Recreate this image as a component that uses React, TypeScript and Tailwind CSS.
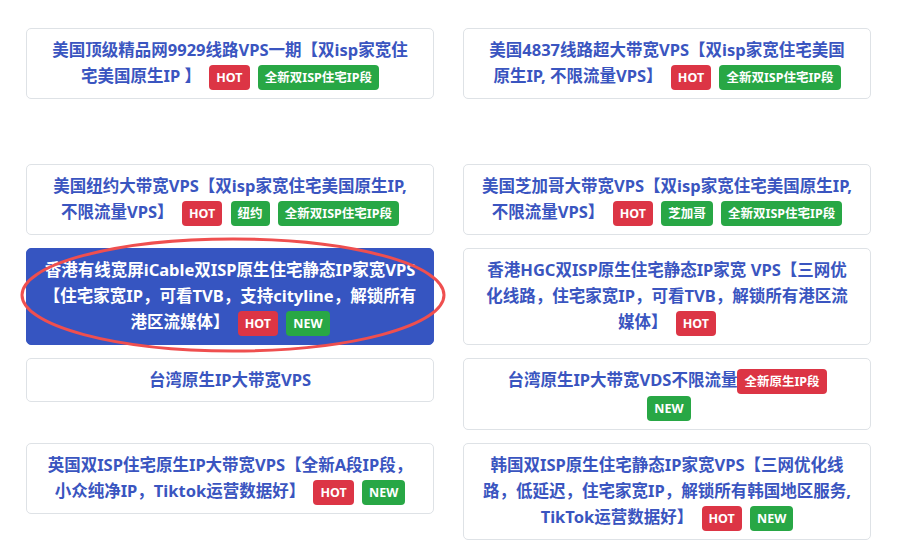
import React from 'react'

type Color = 'red' | 'green'

function Badge({ color, children, tight }: { color: Color; children: React.ReactNode; tight?: boolean }) {
  return (
    <span
      className={`inline-block rounded-[4px] px-[7px] py-[4px] align-middle text-[12.5px] leading-[17px] font-bold text-white ${
        tight ? '' : 'ml-[4px]'
      } ${color === 'red' ? 'bg-[#dc3545]' : 'bg-[#28a745]'}`}
    >
      {children}
    </span>
  )
}

const Hot = () => <Badge color="red">HOT</Badge>
const New = () => <Badge color="green">NEW</Badge>
const IspBlock = () => <Badge color="green">全新双ISP住宅IP段</Badge>

function Card({ active, children }: { active?: boolean; children: React.ReactNode }) {
  return (
    <div
      className={`rounded-[5px] border px-[12px] py-[8px] text-center text-[16.5px] leading-[26px] font-bold ${
        active ? 'border-[#3655c1] bg-[#3655c1] text-white' : 'border-[#dee2e6] bg-white text-[#3a55c0]'
      }`}
    >
      {children}
    </div>
  )
}

export default function App() {
  return (
    <div
      className="relative min-h-[551px] w-[897px] bg-white px-[26px] pt-[28px]"
      style={{ fontFamily: '"Noto Sans", "Noto Sans CJK SC", sans-serif' }}
    >
      <div className="grid grid-cols-2 items-start gap-x-[29px] gap-y-[13px]">
        <Card>
          美国顶级精品网9929线路VPS一期【双isp家宽住
          <br />
          宅美国原生IP 】 <Hot /> <IspBlock />
        </Card>
        <Card>
          美国4837线路超大带宽VPS【双isp家宽住宅美国
          <br />
          原生IP, 不限流量VPS】 <Hot /> <IspBlock />
        </Card>

        <div className="col-span-2 h-[39px]" />

        <Card>
          美国纽约大带宽VPS【双isp家宽住宅美国原生IP,
          <br />
          不限流量VPS】 <Hot /> <Badge color="green">纽约</Badge> <IspBlock />
        </Card>
        <Card>
          美国芝加哥大带宽VPS【双isp家宽住宅美国原生IP,
          <br />
          不限流量VPS】 <Hot /> <Badge color="green">芝加哥</Badge> <IspBlock />
        </Card>

        <Card active>
          香港有线宽屏iCable双ISP原生住宅静态IP家宽VPS
          <br />
          【住宅家宽IP，可看TVB，支持cityline，解锁所有
          <br />
          港区流媒体】 <Hot /> <New />
        </Card>
        <Card>
          香港HGC双ISP原生住宅静态IP家宽 VPS【三网优
          <br />
          化线路，住宅家宽IP，可看TVB，解锁所有港区流
          <br />
          媒体】 <Hot />
        </Card>

        <Card>台湾原生IP大带宽VPS</Card>
        <Card>
          台湾原生IP大带宽VDS不限流量
          <Badge color="red" tight>
            全新原生IP段
          </Badge>
          <br />
          <New />
        </Card>

        <Card>
          英国双ISP住宅原生IP大带宽VPS【全新A段IP段，
          <br />
          小众纯净IP，Tiktok运营数据好】 <Hot /> <New />
        </Card>
        <Card>
          韩国双ISP原生住宅静态IP家宽VPS【三网优化线
          <br />
          路，低延迟，住宅家宽IP，解锁所有韩国地区服务,
          <br />
          TikTok运营数据好】 <Hot /> <New />
        </Card>
      </div>

      {/* annotation circle */}
      <svg className="pointer-events-none absolute left-0 top-0" width="897" height="551">
        <ellipse cx="233" cy="295" rx="211" ry="56" fill="none" stroke="#ef4f4f" strokeWidth="3" />
      </svg>
    </div>
  )
}
